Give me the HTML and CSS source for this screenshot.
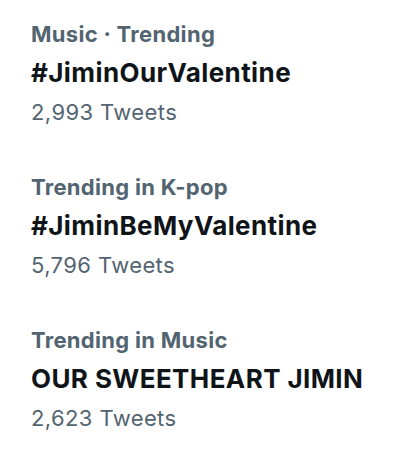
FILE: index.html
```html
<!DOCTYPE html>
<html lang="en">
<head>
    <meta charset="UTF-8">
    <meta name="viewport" content="width=device-width, initial-scale=1.0">
    <title>Trends</title>
    <link rel="stylesheet" href="styles.css">
</head>
<body>
    <div class="trends">
        <div class="trend">
            <div class="trend-meta">Music · Trending</div>
            <div class="trend-name">#JiminOurValentine</div>
            <div class="trend-count">2,993 Tweets</div>
        </div>
        <div class="trend">
            <div class="trend-meta">Trending in K-pop</div>
            <div class="trend-name">#JiminBeMyValentine</div>
            <div class="trend-count">5,796 Tweets</div>
        </div>
        <div class="trend">
            <div class="trend-meta">Trending in Music</div>
            <div class="trend-name">OUR SWEETHEART JIMIN</div>
            <div class="trend-count">2,623 Tweets</div>
        </div>
    </div>
</body>
</html>
```

FILE: styles.css
```css
body {
    margin: 0;
    background: #ffffff;
    font-family: Inter, "Noto Sans", Arial, sans-serif;
}
.trends {
    display: flex;
    flex-direction: column;
    gap: 38px;
    padding: 16px 0 0 31px;
}
.trend-meta {
    font-size: 22px;
    font-weight: 700;
    letter-spacing: 0.3px;
    line-height: 37px;
    color: #536471;
}
.trend-name {
    font-size: 26px;
    font-weight: 700;
    letter-spacing: 0.4px;
    line-height: 40px;
    color: #0f1419;
}
.trend-count {
    font-size: 22px;
    font-weight: 400;
    letter-spacing: 0.4px;
    line-height: 38px;
    color: #536471;
}
```
